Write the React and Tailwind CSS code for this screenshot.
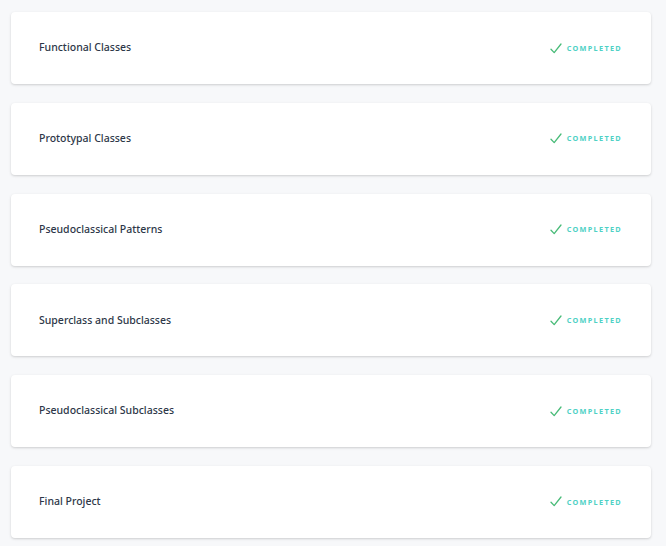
import React from 'react';

const lessons = [
    'Functional Classes',
    'Prototypal Classes',
    'Pseudoclassical Patterns',
    'Superclass and Subclasses',
    'Pseudoclassical Subclasses',
    'Final Project',
];

function CheckIcon() {
    return (
        <svg width="12" height="11" viewBox="0 0 12 11" fill="none" className="shrink-0">
            <path d="M1 6.2 L4.2 9.6 L11 1" stroke="#48bb78" strokeWidth="1.3" strokeLinecap="round" strokeLinejoin="round" />
        </svg>
    );
}

function LessonCard({ title }) {
    return (
        <div className="flex items-center justify-between h-[72px] bg-white rounded-[4px] pl-[28px] pr-[29px] shadow-[0_1px_3px_rgba(0,0,0,0.12),0_1px_2px_rgba(0,0,0,0.06)]">
            <span className="text-[10.5px] font-medium text-[#2d3748]">{title}</span>
            <div className="flex items-center gap-[5px]">
                <CheckIcon />
                <span className="text-[7.3px] font-bold tracking-[0.18em] text-[#4fd1c5]">COMPLETED</span>
            </div>
        </div>
    );
}

export default function App() {
    return (
        <div
            className="min-h-[546px] bg-[#f7f8fa] pl-[11px] pt-[12px] pb-4"
            style={{ fontFamily: '"Noto Sans", "Open Sans", sans-serif' }}
        >
            <div className="w-[640px] flex flex-col gap-[18.8px]">
                {lessons.map((title) => (
                    <LessonCard key={title} title={title} />
                ))}
            </div>
        </div>
    );
}
